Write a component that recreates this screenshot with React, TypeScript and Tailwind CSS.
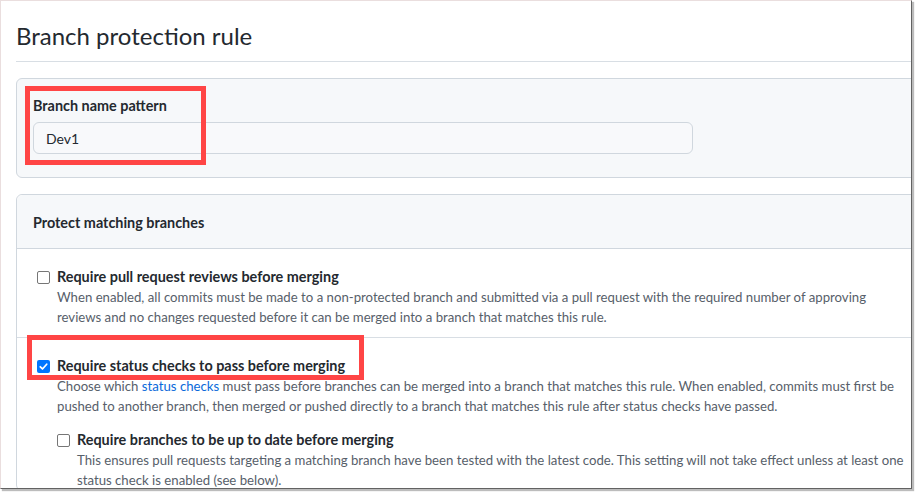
import React from "react";

const FONT = "font-['Lato','Liberation_Sans',sans-serif]";

function Box({ checked }: { checked?: boolean }) {
  if (checked) {
    return (
      <span className="mt-[4px] flex h-[13px] w-[13px] shrink-0 items-center justify-center rounded-[2px] bg-[#0075ff]">
        <svg width="11" height="11" viewBox="0 0 12 12" fill="none">
          <path d="M2.5 6.3l2.4 2.4 4.6-5.2" stroke="#fff" strokeWidth="1.9" strokeLinecap="round" strokeLinejoin="round" />
        </svg>
      </span>
    );
  }
  return <span className="mt-[4px] block h-[13px] w-[13px] shrink-0 rounded-[2px] border border-[#767676] bg-white" />;
}

// one protection option: checkbox + bold label + grey note lines
function Option({
  label,
  lines,
  checked,
  children,
}: {
  label: string;
  lines: React.ReactNode[];
  checked?: boolean;
  children?: React.ReactNode;
}) {
  return (
    <div className="flex gap-[7px]">
      <Box checked={checked} />
      <div>
        <div className="text-[14.4px] font-bold leading-[20px] text-[#24292f]">{label}</div>
        {lines.map((l, i) => (
          <div key={i} className="whitespace-nowrap text-[13.2px] leading-[20px] text-[#57606a]">
            {l}
          </div>
        ))}
        {children}
      </div>
    </div>
  );
}

export default function App() {
  return (
    <div className={`h-[495px] w-[918px] overflow-hidden bg-white ${FONT}`}>
      <div className="relative h-[489px] w-[912px] overflow-hidden border-l border-t border-l-[#eadede] border-t-[#eadede] border-r border-b border-r-[#626262] border-b-[#626262] bg-white shadow-[2px_2px_1px_#bcbcbc]">
        <div className="w-[960px] pl-[15px]">
          <h2 className="border-b border-[#d8dee4] pb-[10px] pt-[19px] text-[24px] font-normal leading-[31px] text-[#24292f]">
            Branch protection rule
          </h2>

          <div className="mt-[16px] rounded-[6px] border border-[#d0d7de] bg-[#f6f8fa] px-[16px] pb-[23px] pt-[17px]">
            <div className="relative">
              <div className="text-[14.4px] font-bold leading-[20px] text-[#24292f]">Branch name pattern</div>
              <div className="mt-[6px] flex h-[32px] w-[660px] items-center rounded-[6px] border border-[#d0d7de] bg-[#f8f9fb] px-[12px] text-[14px] text-[#24292f]">
                Dev1
              </div>
              <div className="absolute left-[-8px] top-[-10px] h-[79px] w-[181px] border-[5px] border-[#ff4545]" />
            </div>
          </div>

          <div className="mt-[16px] rounded-[6px] border border-[#d0d7de]">
            <div className="rounded-t-[6px] border-b border-[#d0d7de] bg-[#f6f8fa] px-[16px] pb-[15px] pt-[18px] text-[14.4px] font-bold leading-[20px] text-[#24292f]">
              Protect matching branches
            </div>

            <div className="border-b border-[#d8dee4] pb-[10px] pl-[20px] pt-[18px]">
              <Option
                label="Require pull request reviews before merging"
                lines={[
                  "When enabled, all commits must be made to a non-protected branch and submitted via a pull request with the required number of approving",
                  "reviews and no changes requested before it can be merged into a branch that matches this rule.",
                ]}
              />
            </div>

            <div className="relative pl-[20px] pt-[18px]">
              <Option
                checked
                label="Require status checks to pass before merging"
                lines={[
                  <>
                    Choose which <span className="text-[#0969da]">status checks</span> must pass before branches can be merged into a branch that matches this rule. When enabled, commits must first be
                  </>,
                  "pushed to another branch, then merged or pushed directly to a branch that matches this rule after status checks have passed.",
                ]}
              >
                <div className="mt-[14px]">
                  <Option
                    label="Require branches to be up to date before merging"
                    lines={[
                      "This ensures pull requests targeting a matching branch have been tested with the latest code. This setting will not take effect unless at least one",
                      "status check is enabled (see below).",
                    ]}
                  />
                </div>
              </Option>
              <div className="absolute left-[10px] top-[-3px] h-[45px] w-[337px] border-[5px] border-[#ff4545]" />
            </div>
          </div>
        </div>
      </div>
    </div>
  );
}
